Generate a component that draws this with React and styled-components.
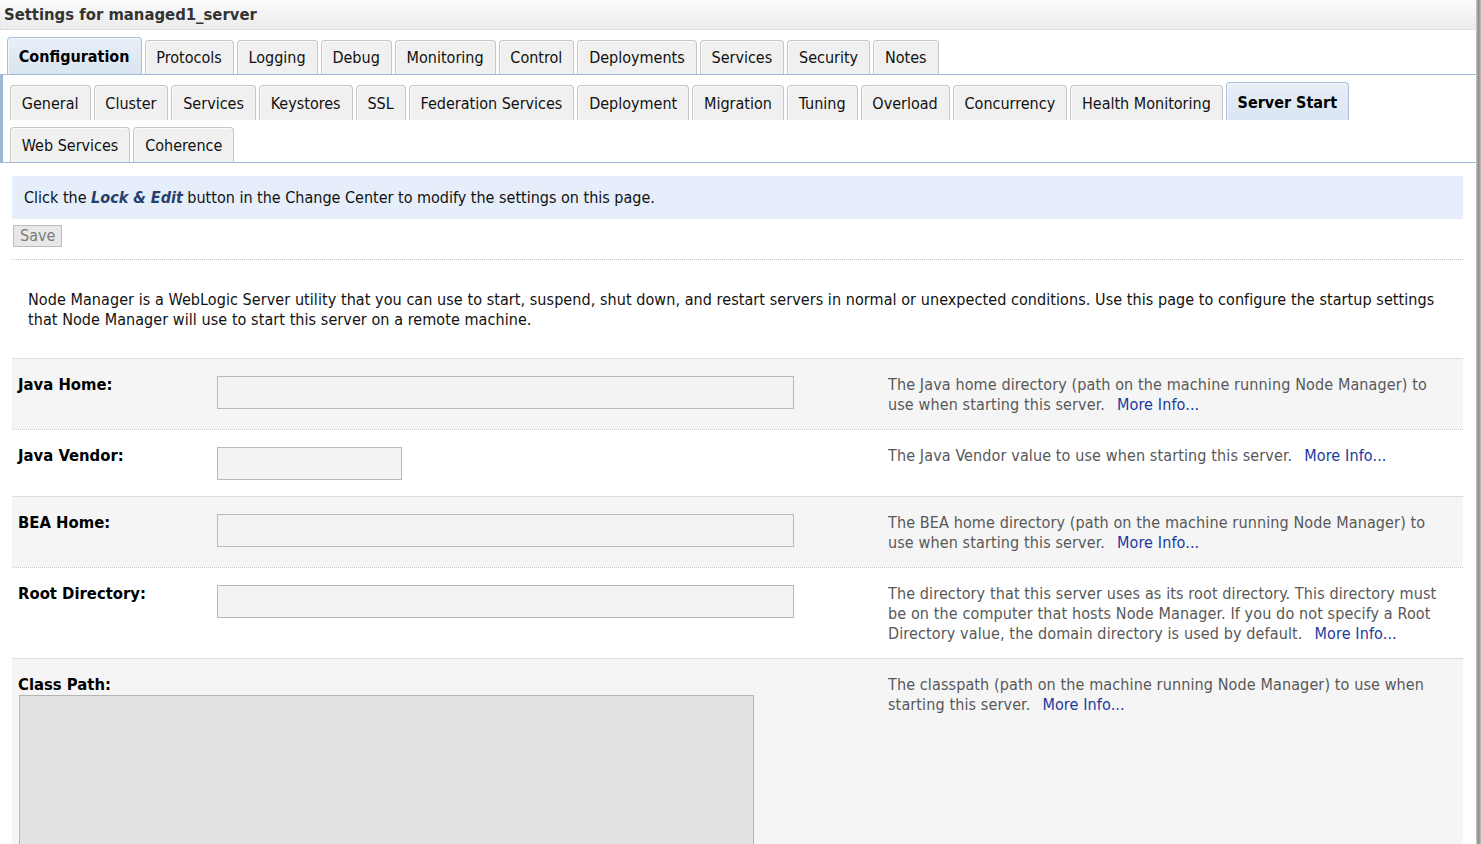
import React from "react";
import styled, { createGlobalStyle, css } from "styled-components";

const GlobalStyle = createGlobalStyle`
  html, body { margin: 0; padding: 0; background: #fff; }
  body { font-family: "DejaVu Sans Condensed", "DejaVu Sans", sans-serif; color: #000; }
  #root { width: 1482px; height: 844px; overflow: hidden; }
`;

const Frame = styled.div`
  display: flex;
  align-items: flex-start;
  width: 1482px;
  height: 844px;
  overflow: hidden;
`;

const Page = styled.div`
  width: 1476px;
  flex: none;
  display: flex;
  flex-direction: column;
  & > * { flex-shrink: 0; }
`;

const EdgeBar = styled.div`
  width: 6px;
  height: 844px;
  flex: none;
  background: linear-gradient(to right, #c9c9c9, #8f8f8f 40%, #a8a8a8 70%, #e6e6e6);
`;

const TitleBar = styled.div`
  height: 29px;
  padding-left: 4px;
  display: flex;
  align-items: center;
  background: linear-gradient(#fbfbfb, #ebebeb);
  border-bottom: 1px dotted #c8c8c8;
  font-weight: bold;
  font-size: 16.5px;
  color: #333;
`;

const MainTabs = styled.div`
  display: flex;
  align-items: flex-end;
  gap: 3px;
  padding-left: 7px;
  margin-top: 7px;
  border-bottom: 1px solid #9ebad6;
`;

const Tab = styled.div`
  flex: none;
  height: ${(p) => p.$h}px;
  padding: 0 11px 0 10.8px;
  display: flex;
  align-items: center;
  box-sizing: border-box;
  border: 1px solid #c6c6c6;
  border-bottom: none;
  border-radius: 4px 4px 0 0;
  background: #f0f0f0;
  box-shadow: inset 1px 1px 0 #fafafa;
  font-size: 16px;
  color: #111;
  white-space: nowrap;
  ${(p) =>
    p.$active &&
    css`
      height: ${p.$h + 3}px;
      padding-top: 1px;
      font-weight: bold;
      color: #000;
      border-color: #a9c0d8;
      background: linear-gradient(#e8eff8, #d9e5f1);
      box-shadow: inset 1px 1px 0 #f4f8fc;
    `}
`;

const SubArea = styled.div`
  border-left: 3px solid #9db8d4;
  border-bottom: 1px solid #9ebad6;
  padding: 7px 0 0 7px;
  display: flex;
  flex-direction: column;
  gap: 7px;
`;

const SubRow = styled.div`
  display: flex;
  align-items: flex-end;
  gap: 3px;
`;

const Content = styled.div`
  margin: 13px 13px 0 12px;
  display: flex;
  flex-direction: column;
`;

const InfoBox = styled.div`
  height: 43px;
  display: flex;
  align-items: center;
  padding-left: 12px;
  background: #e5eefa;
  font-size: 16px;
  color: #111;
  white-space: pre;
`;

const LockEdit = styled.b`
  font-style: italic;
  color: #263f6e;
`;

const ButtonBar = styled.div`
  padding: 6px 0 12px 1px;
  border-bottom: 1px dotted #c4c4c4;
`;

const SaveButton = styled.button`
  display: block;
  height: 22px;
  padding: 0 6px;
  font-family: inherit;
  font-size: 16px;
  color: #7b7b7b;
  background: #e8e8e8;
  border: 1px solid #bcbcbc;
  line-height: 1;
`;

const Intro = styled.p`
  margin: 0;
  padding: 30px 16px 28px 16px;
  font-size: 16px;
  letter-spacing: 0.07px;
  line-height: 20px;
  color: #111;
`;

const Row = styled.div`
  display: grid;
  grid-template-columns: 205px 671px 1fr;
  align-items: start;
  padding: 16px 0 14px;
  border-top: 1px dotted #c8c8c8;
  background: ${(p) => (p.$shaded ? "#f5f5f5" : "#fff")};
  ${(p) =>
    p.$tall &&
    css`
      min-height: 200px;
    `}
`;

const Label = styled.div`
  padding-left: 6px;
  font-weight: bold;
  font-size: 16.5px;
  line-height: 20px;
  color: #000;
`;

const TextInput = styled.div`
  width: ${(p) => p.$w}px;
  height: 33px;
  box-sizing: border-box;
  border: 1px solid #b9b9b9;
  background: #f3f3f3;
  margin: 1px 0 2px;
`;

const Desc = styled.div`
  font-size: 16px;
  letter-spacing: 0.12px;
  line-height: 20px;
  color: #585858;
  padding-right: 20px;
`;

const MoreInfo = styled.a`
  color: #1c3a9e;
  text-decoration: none;
  margin-left: 12px;
`;

const ClassCell = styled.div`
  grid-column: 1 / 3;
  display: flex;
  flex-direction: column;
`;

const TextArea = styled.div`
  margin: 0 0 0 7px;
  width: 735px;
  height: 180px;
  box-sizing: border-box;
  border: 1px solid #b5b5b5;
  background: #e1e1e1;
`;

const mainTabs = [
  "Configuration",
  "Protocols",
  "Logging",
  "Debug",
  "Monitoring",
  "Control",
  "Deployments",
  "Services",
  "Security",
  "Notes",
];

const subTabs1 = [
  "General",
  "Cluster",
  "Services",
  "Keystores",
  "SSL",
  "Federation Services",
  "Deployment",
  "Migration",
  "Tuning",
  "Overload",
  "Concurrency",
  "Health Monitoring",
  "Server Start",
];
const subTabs2 = ["Web Services", "Coherence"];

const rows = [
  {
    label: "Java Home:",
    w: 577,
    desc: "The Java home directory (path on the machine running Node Manager) to use when starting this server.",
  },
  {
    label: "Java Vendor:",
    w: 185,
    desc: "The Java Vendor value to use when starting this server.",
  },
  {
    label: "BEA Home:",
    w: 577,
    desc: "The BEA home directory (path on the machine running Node Manager) to use when starting this server.",
  },
  {
    label: "Root Directory:",
    w: 577,
    desc: "The directory that this server uses as its root directory. This directory must be on the computer that hosts Node Manager. If you do not specify a Root Directory value, the domain directory is used by default.",
  },
];

export default function App() {
  return (
    <>
      <GlobalStyle />
      <Frame>
        <Page>
          <TitleBar>Settings for managed1_server</TitleBar>
          <MainTabs>
            {mainTabs.map((t) => (
              <Tab key={t} $h={34} $active={t === "Configuration"}>
                {t}
              </Tab>
            ))}
          </MainTabs>
          <SubArea>
            <SubRow>
              {subTabs1.map((t) => (
                <Tab key={t} $h={35} $active={t === "Server Start"}>
                  {t}
                </Tab>
              ))}
            </SubRow>
            <SubRow>
              {subTabs2.map((t) => (
                <Tab key={t} $h={35}>
                  {t}
                </Tab>
              ))}
            </SubRow>
          </SubArea>
          <Content>
            <InfoBox>
              Click the <LockEdit>Lock &amp; Edit</LockEdit> button in the Change Center to modify the settings on this page.
            </InfoBox>
            <ButtonBar>
              <SaveButton disabled>Save</SaveButton>
            </ButtonBar>
            <Intro>
              Node Manager is a WebLogic Server utility that you can use to start, suspend, shut down, and restart servers in normal or unexpected conditions. Use this page to configure the startup settings that Node Manager will use to start this server on a remote machine.
            </Intro>
            {rows.map((r, i) => (
              <Row key={r.label} $shaded={i % 2 === 0}>
                <Label>{r.label}</Label>
                <TextInput $w={r.w} />
                <Desc>
                  {r.desc}
                  <MoreInfo href="#">More Info...</MoreInfo>
                </Desc>
              </Row>
            ))}
            <Row $shaded $tall>
              <ClassCell>
                <Label>Class Path:</Label>
                <TextArea />
              </ClassCell>
              <Desc>
                The classpath (path on the machine running Node Manager) to use when starting this server.
                <MoreInfo href="#">More Info...</MoreInfo>
              </Desc>
            </Row>
          </Content>
        </Page>
        <EdgeBar />
      </Frame>
    </>
  );
}
